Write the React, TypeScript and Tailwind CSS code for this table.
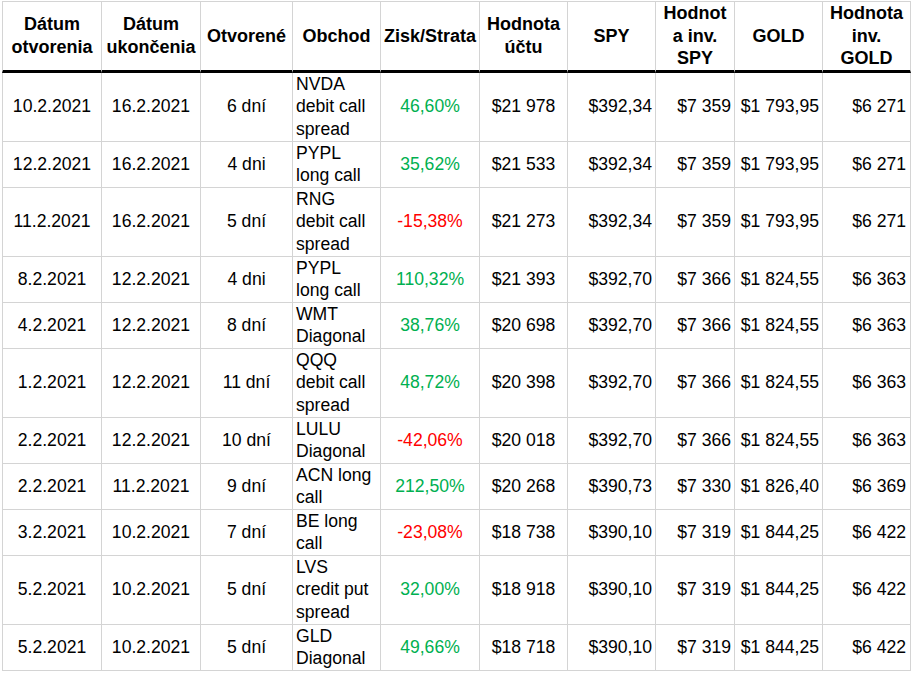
type Row = {
  open: string
  close: string
  days: string
  trade: string[]
  pl: string
  loss?: boolean
  account: string
  spy: string
  invSpy: string
  gold: string
  invGold: string
}

const rows: Row[] = [
  { open: '10.2.2021', close: '16.2.2021', days: '6 dní', trade: ['NVDA', 'debit call', 'spread'], pl: '46,60%', account: '$21 978', spy: '$392,34', invSpy: '$7 359', gold: '$1 793,95', invGold: '$6 271' },
  { open: '12.2.2021', close: '16.2.2021', days: '4 dni', trade: ['PYPL', 'long call'], pl: '35,62%', account: '$21 533', spy: '$392,34', invSpy: '$7 359', gold: '$1 793,95', invGold: '$6 271' },
  { open: '11.2.2021', close: '16.2.2021', days: '5 dní', trade: ['RNG', 'debit call', 'spread'], pl: '-15,38%', loss: true, account: '$21 273', spy: '$392,34', invSpy: '$7 359', gold: '$1 793,95', invGold: '$6 271' },
  { open: '8.2.2021', close: '12.2.2021', days: '4 dni', trade: ['PYPL', 'long call'], pl: '110,32%', account: '$21 393', spy: '$392,70', invSpy: '$7 366', gold: '$1 824,55', invGold: '$6 363' },
  { open: '4.2.2021', close: '12.2.2021', days: '8 dní', trade: ['WMT', 'Diagonal'], pl: '38,76%', account: '$20 698', spy: '$392,70', invSpy: '$7 366', gold: '$1 824,55', invGold: '$6 363' },
  { open: '1.2.2021', close: '12.2.2021', days: '11 dní', trade: ['QQQ', 'debit call', 'spread'], pl: '48,72%', account: '$20 398', spy: '$392,70', invSpy: '$7 366', gold: '$1 824,55', invGold: '$6 363' },
  { open: '2.2.2021', close: '12.2.2021', days: '10 dní', trade: ['LULU', 'Diagonal'], pl: '-42,06%', loss: true, account: '$20 018', spy: '$392,70', invSpy: '$7 366', gold: '$1 824,55', invGold: '$6 363' },
  { open: '2.2.2021', close: '11.2.2021', days: '9 dní', trade: ['ACN long', 'call'], pl: '212,50%', account: '$20 268', spy: '$390,73', invSpy: '$7 330', gold: '$1 826,40', invGold: '$6 369' },
  { open: '3.2.2021', close: '10.2.2021', days: '7 dní', trade: ['BE long', 'call'], pl: '-23,08%', loss: true, account: '$18 738', spy: '$390,10', invSpy: '$7 319', gold: '$1 844,25', invGold: '$6 422' },
  { open: '5.2.2021', close: '10.2.2021', days: '5 dní', trade: ['LVS', 'credit put', 'spread'], pl: '32,00%', account: '$18 918', spy: '$390,10', invSpy: '$7 319', gold: '$1 844,25', invGold: '$6 422' },
  { open: '5.2.2021', close: '10.2.2021', days: '5 dní', trade: ['GLD', 'Diagonal'], pl: '49,66%', account: '$18 718', spy: '$390,10', invSpy: '$7 319', gold: '$1 844,25', invGold: '$6 422' },
]

const headers: string[][] = [
  ['Dátum', 'otvorenia'],
  ['Dátum', 'ukončenia'],
  ['Otvorené'],
  ['Obchod'],
  ['Zisk/Strata'],
  ['Hodnota', 'účtu'],
  ['SPY'],
  ['Hodnot', 'a inv.', 'SPY'],
  ['GOLD'],
  ['Hodnota', 'inv.', 'GOLD'],
]

const widths = [
  'w-[100px]', 'w-[99px]', 'w-[92px]', 'w-[88px]', 'w-[99px]',
  'w-[88px]', 'w-[88px]', 'w-[79px]', 'w-[88px]', 'w-[88px]',
]

const cell = 'border-r border-b border-[#d4d4d4] p-0 align-middle'

function Lines({ items }: { items: string[] }) {
  return (
    <>
      {items.map((t, i) => (
        <span key={i} className="block whitespace-nowrap">
          {t}
        </span>
      ))}
    </>
  )
}

export default function App() {
  return (
    <div className="min-h-screen bg-white pt-px pl-[2px] font-['Liberation_Sans',Arial,sans-serif] text-[17.6px] leading-[22.5px] text-black">
      <table className="table-fixed w-[909px] border-separate border-spacing-0">
        <colgroup>
          {widths.map((w, i) => (
            <col key={i} className={w} />
          ))}
        </colgroup>
        <thead>
          <tr>
            {headers.map((h, i) => (
              <th
                key={i}
                className={`h-[71px] border-t border-r border-[#d4d4d4] border-b-[3px] border-b-black p-0 text-center align-middle text-[18px] font-bold ${i === 0 ? 'border-l' : ''}`}
              >
                <Lines items={h} />
              </th>
            ))}
          </tr>
        </thead>
        <tbody>
          {rows.map((r, i) => {
            const h = r.trade.length === 3 ? 'h-[69px]' : 'h-[46px]'
            return (
              <tr key={i}>
                <td className={`${cell} ${h} border-l text-center`}>{r.open}</td>
                <td className={`${cell} text-center`}>{r.close}</td>
                <td className={`${cell} text-center`}>{r.days}</td>
                <td className={`${cell} pl-[3px] text-left`}>
                  <Lines items={r.trade} />
                </td>
                <td className={`${cell} text-center ${r.loss ? 'text-[#ff0000]' : 'text-[#00b050]'}`}>{r.pl}</td>
                <td className={`${cell} text-center`}>{r.account}</td>
                <td className={`${cell} pr-[3px] text-right`}>{r.spy}</td>
                <td className={`${cell} pr-[3px] text-right`}>{r.invSpy}</td>
                <td className={`${cell} pr-[3px] text-right`}>{r.gold}</td>
                <td className={`${cell} pr-[4px] text-right`}>{r.invGold}</td>
              </tr>
            )
          })}
        </tbody>
      </table>
    </div>
  )
}
